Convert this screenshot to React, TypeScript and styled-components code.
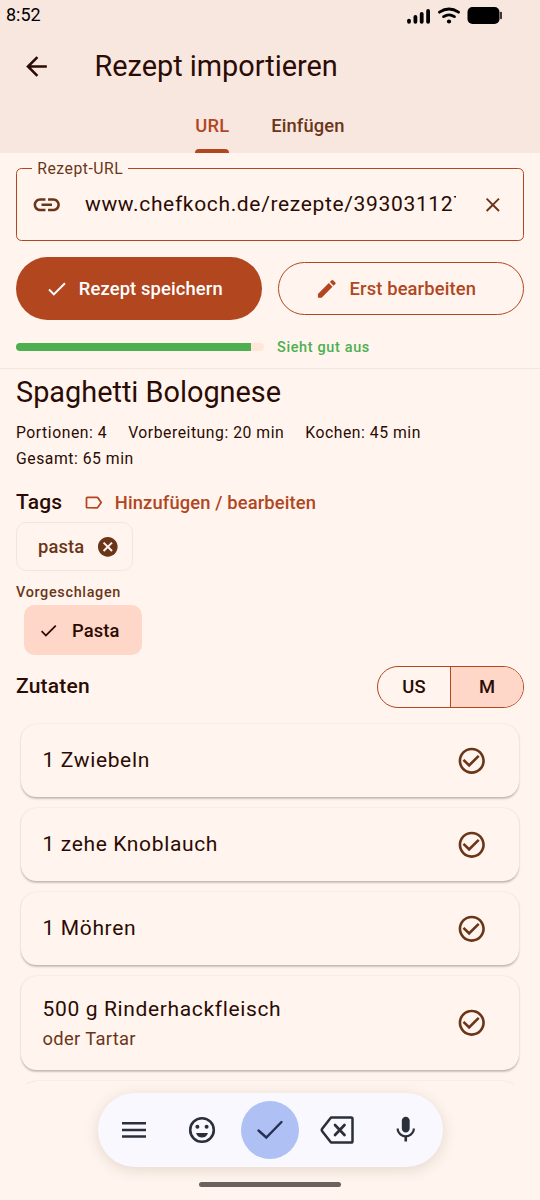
import React from "react";
import styled, { createGlobalStyle } from "styled-components";
import {
  MdArrowBack,
  MdCancel,
  MdCheck,
  MdCheckCircleOutline,
  MdClose,
  MdEdit,
  MdLabelOutline,
  MdLink,
  MdMic,
} from "react-icons/md";

const color = {
  surface: "#fff5ee",
  header: "#f8e7df",
  primary: "#b2461f",
  text: "#2b0b03",
  muted: "#6b3519",
  selected: "#ffd7c8",
  outline: "#f3e6dd",
  green: "#4caf50",
  key: "#2b2f3a",
};

const GlobalStyle = createGlobalStyle`
  * { box-sizing: border-box; }
  body { margin: 0; background: ${color.surface}; }
  svg { display: block; flex: none; }
`;

const Screen = styled.div`
  width: 540px;
  height: 1200px;
  overflow: hidden;
  display: flex;
  flex-direction: column;
  background: ${color.surface};
  color: ${color.text};
  font-family: Roboto, sans-serif;
  white-space: nowrap;
`;

const Header = styled.header`
  height: 152.5px;
  flex: none;
  display: flex;
  flex-direction: column;
  background: ${color.header};
`;

const StatusBar = styled.div`
  height: 30px;
  padding: 0 38.5px 0 6px;
  display: flex;
  align-items: center;
  justify-content: space-between;
  font-size: 18px;
  color: #000;
`;

const Clock = styled.span`
  padding-bottom: 1px;
`;

const AppBar = styled.div`
  height: 72px;
  padding-left: 21px;
  display: flex;
  align-items: center;
  gap: 42.5px;
`;

const Title = styled.h1`
  margin: 0;
  font-size: 28.875px;
  font-weight: 400;
  line-height: 36px;
`;

const Tabs = styled.nav`
  flex: 1;
  display: flex;
  justify-content: center;
  gap: 42px;
`;

const Tab = styled.div<{ $active?: boolean }>`
  position: relative;
  display: flex;
  align-items: center;
  padding-bottom: 3.5px;
  font-size: 18.375px;
  font-weight: 500;
  letter-spacing: 0.13px;
  color: ${(p) => (p.$active ? color.primary : color.muted)};
  &::after {
    content: "";
    display: ${(p) => (p.$active ? "block" : "none")};
    position: absolute;
    left: 0;
    right: 0;
    bottom: 0;
    height: 4px;
    border-radius: 4px 4px 0 0;
    background: ${color.primary};
  }
`;

const Form = styled.section`
  height: 216px;
  flex: none;
  padding: 15.5px 16px 0;
  border-bottom: 1.3px solid ${color.outline};
`;

const UrlField = styled.div`
  position: relative;
  height: 73px;
  padding: 0 18.3px 0 14px;
  border: 1.4px solid ${color.primary};
  border-radius: 5.5px;
  display: flex;
  align-items: center;
  color: ${color.muted};
`;

const FieldLabel = styled.span`
  position: absolute;
  left: 15px;
  top: -10.5px;
  padding: 0 5.3px;
  background: ${color.surface};
  font-size: 15.75px;
  line-height: 20px;
  letter-spacing: 0.5px;
`;

const FieldValue = styled.span`
  width: 371px;
  margin-left: 22.5px;
  padding-bottom: 1.5px;
  overflow: hidden;
  font-size: 21px;
  line-height: 30px;
  letter-spacing: 0.656px;
  color: ${color.text};
`;

const ClearSlot = styled.span`
  margin-left: auto;
`;

const Actions = styled.div`
  margin-top: 16px;
  display: grid;
  grid-template-columns: 1fr 1fr;
  align-items: center;
  gap: 16px;
`;

const Action = styled.button<{ $filled?: boolean }>`
  height: ${(p) => (p.$filled ? 63 : 52.5)}px;
  padding: 0 10.5px 0 0;
  display: flex;
  align-items: center;
  justify-content: center;
  gap: 10.5px;
  border: ${(p) => (p.$filled ? "none" : `1.3px solid ${color.primary}`)};
  border-radius: 32px;
  background: ${(p) => (p.$filled ? color.primary : "transparent")};
  color: ${(p) => (p.$filled ? "#fff" : color.primary)};
  font: 500 18.375px Roboto, sans-serif;
  letter-spacing: 0.13px;
`;

const Quality = styled.div`
  margin-top: 16px;
  height: 21px;
  display: flex;
  align-items: center;
  gap: 13.5px;
  color: ${color.green};
  font-size: 14.44px;
  line-height: 21px;
  font-weight: 500;
  letter-spacing: 0.656px;
`;

const QualityLabel = styled.span`
  padding-top: 1px;
`;

const Track = styled.div`
  width: 247.5px;
  height: 8px;
  border-radius: 4px;
  overflow: hidden;
  background: #ffe6d9;
`;

const Fill = styled.div`
  width: 95%;
  height: 100%;
  background: ${color.green};
`;

const Recipe = styled.main`
  height: 715.5px;
  flex: none;
  padding: 5.5px 16px 0;
  overflow: hidden;
`;

const Facts = styled.div`
  margin-top: 9.5px;
  display: flex;
  flex-wrap: wrap;
  column-gap: 21px;
  font-size: 15.75px;
  line-height: 26.2px;
  letter-spacing: 0.525px;
`;

const TagHeader = styled.div`
  margin-top: 14.5px;
  height: 32px;
  display: flex;
  align-items: center;
`;

const SectionTitle = styled.h2`
  margin: 0;
  font-size: 21px;
  line-height: 31px;
  font-weight: 500;
  letter-spacing: 0.2px;
`;

const TagLink = styled.a`
  margin-left: 20.5px;
  display: flex;
  align-items: center;
  gap: 11px;
  color: ${color.primary};
  font-size: 18.375px;
  font-weight: 500;
  letter-spacing: 0.13px;
`;

const Chip = styled.div<{ $selected?: boolean }>`
  width: fit-content;
  height: 49.5px;
  margin: ${(p) => (p.$selected ? "3px 0 0 7.5px" : "3.2px 0 0")};
  padding: ${(p) => (p.$selected ? "0 22px 0 14.5px" : "0 12px 0 21px")};
  display: flex;
  align-items: center;
  gap: ${(p) => (p.$selected ? 13 : 12)}px;
  border: ${(p) => (p.$selected ? "none" : `1.3px solid ${color.outline}`)};
  border-radius: 10.5px;
  background: ${(p) => (p.$selected ? color.selected : "transparent")};
  color: ${(p) => (p.$selected ? color.text : color.muted)};
  font-size: 18.375px;
  font-weight: 500;
  letter-spacing: 0.13px;
`;

const Suggested = styled.div`
  margin-top: 11.3px;
  padding-top: 1px;
  height: 20px;
  font-size: 14.44px;
  line-height: 20px;
  font-weight: 500;
  letter-spacing: 0.656px;
  color: ${color.muted};
`;

const IngredientHeader = styled.div`
  margin-top: 10.7px;
  height: 42px;
  display: flex;
  align-items: center;
  justify-content: space-between;
`;

const Segmented = styled.div`
  width: 147px;
  height: 42px;
  display: flex;
  overflow: hidden;
  border: 1.3px solid ${color.primary};
  border-radius: 21px;
`;

const Segment = styled.div<{ $selected?: boolean }>`
  flex: 1;
  display: flex;
  align-items: center;
  justify-content: center;
  font-size: 18.375px;
  font-weight: 500;
  letter-spacing: 0.13px;
  background: ${(p) => (p.$selected ? color.selected : "transparent")};
  & + & {
    border-left: 1.3px solid ${color.primary};
  }
`;

const Ingredients = styled.div`
  margin-top: 16.3px;
  padding: 0 5px;
  display: flex;
  flex-direction: column;
  gap: 10.5px;
`;

const Card = styled.div<{ $tall?: boolean }>`
  height: ${(p) => (p.$tall ? 94.5 : 73.5)}px;
  flex: none;
  padding: 0 32px 0 21.5px;
  display: flex;
  align-items: center;
  justify-content: space-between;
  border-radius: 15.75px;
  box-shadow: 0 1.3px 2px rgba(60, 40, 35, 0.22), 0 0.3px 1.3px rgba(60, 40, 35, 0.1);
  background: ${color.surface};
  color: ${color.muted};
`;

const Ingredient = styled.div`
  color: ${color.text};
  font-size: 21px;
  line-height: 31.5px;
  letter-spacing: 0.64px;
`;

const Note = styled.div`
  font-size: 18.375px;
  line-height: 27px;
  letter-spacing: 0.33px;
`;

const Footer = styled.footer`
  flex: 1;
  display: flex;
  flex-direction: column;
  align-items: center;
  padding-top: 8.5px;
`;

const Keys = styled.div`
  width: 345px;
  height: 74px;
  padding: 0 3px;
  display: grid;
  grid-template-columns: repeat(5, 1fr);
  place-items: center;
  border-radius: 37px;
  background: #faf8ff;
  color: ${color.key};
  box-shadow: 0 3px 14px rgba(90, 60, 40, 0.16);
`;

const EnterKey = styled.div`
  width: 58px;
  height: 58px;
  display: grid;
  place-items: center;
  border-radius: 50%;
  background: #afc0f4;
  color: #263052;
`;

const HomeIndicator = styled.div`
  width: 142px;
  height: 5px;
  margin-top: 15.5px;
  border-radius: 3px;
  background: #6c625d;
`;

const StatusIcons = () => (
  <svg width="97" height="20" viewBox="0 0 97 20">
    <g stroke="#000" strokeWidth="3.8" strokeLinecap="round">
      <path d="M4.5 15.6v1.2M10.9 12v4.8M17.2 8.8v8M23.6 6v10.8" transform="translate(-.5 0)" />
    </g>
    <g fill="none" stroke="#000" strokeWidth="2.8" strokeLinecap="round">
      <path d="M34.5 7.2Q44 .8 53.5 7.2M38.6 11.6Q44 8 49.4 11.6" />
    </g>
    <circle cx="44" cy="16.5" r="2.1" />
    <rect x="62.5" y="2" width="32" height="17" rx="5" />
    <path d="M96 7.5v6" stroke="#000" strokeWidth="1.5" strokeLinecap="round" />
  </svg>
);

const MenuIcon = () => (
  <svg width="24" height="18" viewBox="0 0 24 18">
    <path d="M0 2.3h24M0 9h24M0 15.5h24" stroke="currentColor" strokeWidth="2.5" />
  </svg>
);

const SmileIcon = () => (
  <svg width="28" height="28" viewBox="0 0 28 28" fill="currentColor">
    <circle cx="14" cy="14" r="11.8" fill="none" stroke="currentColor" strokeWidth="2.6" />
    <circle cx="9.4" cy="10.8" r="2" />
    <circle cx="18.6" cy="10.8" r="2" />
    <path d="M8 16.9h12q-1.6 4.6-6 4.6t-6-4.6z" />
  </svg>
);

const EnterIcon = () => (
  <svg width="28" height="22" viewBox="0 0 28 22" fill="none" stroke="currentColor">
    <path d="M2.5 11.5l7.8 7L25.5 3" strokeWidth="2.4" strokeLinecap="round" />
  </svg>
);

const BackspaceIcon = () => (
  <svg width="35" height="28" viewBox="0 0 35 28" fill="none" stroke="currentColor">
    <path
      d="M11 1.5h20.2q1.3 0 1.3 1.3v22.4q0 1.3-1.3 1.3H11L2.2 15.2Q1.3 14 2.2 12.8z"
      strokeWidth="2.5"
      strokeLinejoin="round"
    />
    <path d="M15 9l9.5 10M24.5 9L15 19" strokeWidth="2.7" strokeLinecap="round" />
  </svg>
);

const ingredients = [
  { name: "1 Zwiebeln" },
  { name: "1 zehe Knoblauch" },
  { name: "1 Möhren" },
  { name: "500 g Rinderhackfleisch", note: "oder Tartar" },
  { name: "" },
];

export default function App() {
  return (
    <>
      <GlobalStyle />
      <Screen>
        <Header>
          <StatusBar>
            <Clock>8:52</Clock>
            <StatusIcons />
          </StatusBar>
          <AppBar>
            <MdArrowBack size={31} />
            <Title>Rezept importieren</Title>
          </AppBar>
          <Tabs>
            <Tab $active>URL</Tab>
            <Tab>Einfügen</Tab>
          </Tabs>
        </Header>
        <Form>
          <UrlField>
            <FieldLabel>Rezept-URL</FieldLabel>
            <MdLink size={31.5} />
            <FieldValue>www.chefkoch.de/rezepte/393031127</FieldValue>
            <ClearSlot>
              <MdClose size={23.6} />
            </ClearSlot>
          </UrlField>
          <Actions>
            <Action $filled>
              <MdCheck size={23.6} />
              Rezept speichern
            </Action>
            <Action>
              <MdEdit size={23.6} />
              Erst bearbeiten
            </Action>
          </Actions>
          <Quality>
            <Track>
              <Fill />
            </Track>
            <QualityLabel>Sieht gut aus</QualityLabel>
          </Quality>
        </Form>
        <Recipe>
          <Title as="h2">Spaghetti Bolognese</Title>
          <Facts>
            <span>Portionen: 4</span>
            <span>Vorbereitung: 20 min</span>
            <span>Kochen: 45 min</span>
            <span>Gesamt: 65 min</span>
          </Facts>
          <TagHeader>
            <SectionTitle>Tags</SectionTitle>
            <TagLink>
              <MdLabelOutline size={21} />
              Hinzufügen / bearbeiten
            </TagLink>
          </TagHeader>
          <Chip>
            pasta
            <MdCancel size={23.6} />
          </Chip>
          <Suggested>Vorgeschlagen</Suggested>
          <Chip $selected>
            <MdCheck size={21} />
            Pasta
          </Chip>
          <IngredientHeader>
            <SectionTitle>Zutaten</SectionTitle>
            <Segmented>
              <Segment>US</Segment>
              <Segment $selected>M</Segment>
            </Segmented>
          </IngredientHeader>
          <Ingredients>
            {ingredients.map((item, i) => (
              <Card key={i} $tall={!!item.note}>
                <div>
                  <Ingredient>{item.name}</Ingredient>
                  {item.note && <Note>{item.note}</Note>}
                </div>
                <MdCheckCircleOutline size={31.5} />
              </Card>
            ))}
          </Ingredients>
        </Recipe>
        <Footer>
          <Keys>
            <MenuIcon />
            <SmileIcon />
            <EnterKey>
              <EnterIcon />
            </EnterKey>
            <BackspaceIcon />
            <MdMic size={31.5} />
          </Keys>
          <HomeIndicator />
        </Footer>
      </Screen>
    </>
  );
}
